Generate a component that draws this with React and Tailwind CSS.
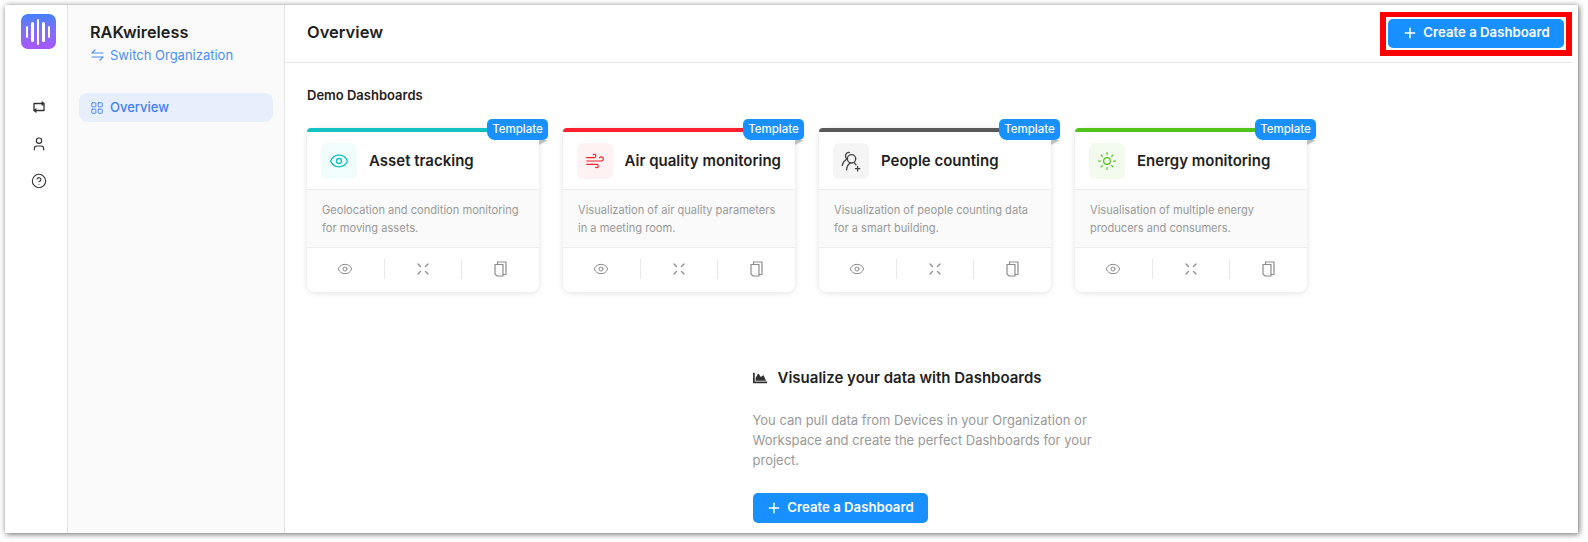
import { CircleHelp, Eye, LayoutGrid, Plus, Sun, User, Wind } from "lucide-react";
import { FaChartArea } from "react-icons/fa";

/* ── Custom icons ── */
const SwitchIcon = () => (
  <svg width="13" height="12" viewBox="0 0 13 12" fill="none" stroke="#4a90f7" strokeWidth="1.2" strokeLinecap="round" strokeLinejoin="round">
    <path d="M1 4h11M1 4l3-3" />
    <path d="M12 8H1M12 8l-3 3" />
  </svg>
);
const LogoMark = () => (
  <div className="w-[35px] h-[35px] rounded-[7px] bg-gradient-to-b from-[#3f80ff] to-[#a855f7] flex items-center justify-center gap-[3px]">
    <span className="w-[2.5px] h-[12px] rounded-full bg-white" />
    <span className="w-[2.5px] h-[20px] rounded-full bg-white" />
    <span className="w-[2.5px] h-[26px] rounded-full bg-white" />
    <span className="w-[2.5px] h-[20px] rounded-full bg-white" />
    <span className="w-[2.5px] h-[12px] rounded-full bg-white" />
  </div>
);
const LoopIcon = () => (
  <svg width="14" height="14" viewBox="0 0 14 14" fill="none" stroke="#333" strokeWidth="1.3" strokeLinecap="round" strokeLinejoin="round">
    <path d="M3.500 10.500H2V3.500h9.500" />
    <path d="M10.500 3.500H12v7H2.500" />
    <path d="M10 2l1.500 1.500L10 5" />
    <path d="M4 9l-1.500 1.500L4 12" />
  </svg>
);
const ShrinkIcon = () => (
  <svg width="12" height="12" viewBox="0 0 12 12" fill="none" stroke="#8c8c8c" strokeWidth="1.3" strokeLinecap="round" strokeLinejoin="round">
    <path d="M1 1l2.500 2.500M11 1L8.500 3.500M1 11l2.500-2.500M11 11L8.500 8.500" />
  </svg>
);
const CopyIcon = () => (
  <svg width="13" height="16" viewBox="0 0 13 16" fill="none" stroke="#8c8c8c" strokeWidth="1.2" strokeLinejoin="round">
    <path d="M1 3.500h8v11.500H3L1 13z" />
    <path d="M3.500 3.500V1h8.500v12.500H9" />
  </svg>
);
const PeopleIcon = () => (
  <svg width="22" height="22" viewBox="0 0 20 20" fill="none" stroke="#444" strokeWidth="1.2" strokeLinecap="round" strokeLinejoin="round">
    <circle cx="10.500" cy="8" r="3.800" />
    <path d="M6 18c.3-3 1.500-5 3.300-6" />
    <path d="M13 11.500l1.500 2" />
    <path d="M8.500 2.200C6.500 2 5 3.400 5 5.400c0 1.200.5 2.200 1.400 2.800C4 9.500 2.500 11.800 2 14" />
    <path d="M16 15v4M14 17h4" />
  </svg>
);

const cards = [
  { title: "Asset tracking", bar: "bg-[#13c2c2]", tint: "bg-[#f1fcfc]", icon: <Eye size={20} color="#13c2c2" strokeWidth={1.6} />, lines: ["Geolocation and condition monitoring", "for moving assets."] },
  { title: "Air quality monitoring", bar: "bg-[#ff1f2f]", tint: "bg-[#fff2f2]", icon: <Wind size={20} color="#f5222d" strokeWidth={1.4} />, lines: ["Visualization of air quality parameters", "in a meeting room."] },
  { title: "People counting", bar: "bg-[#595959]", tint: "bg-[#f5f5f5]", icon: <PeopleIcon />, lines: ["Visualization of people counting data", "for a smart building."] },
  { title: "Energy monitoring", bar: "bg-[#52c41a]", tint: "bg-[#f3fbef]", icon: <Sun size={20} color="#52c41a" strokeWidth={1.5} />, lines: ["Visualisation of multiple energy", "producers and consumers."] },
];

/* ── Demo card ── */
const DemoCard = ({ title, bar, tint, icon, lines }) => (
  <div className="relative w-[232px] h-[164px] rounded-lg bg-white shadow-[0_1px_6px_rgba(0,0,0,0.12)] flex flex-col">
    <div className={`h-[4px] rounded-t-lg ${bar}`} />
    <div className="h-[58px] px-[14px] flex items-center gap-3 border-b border-[#ececec]">
      <div className={`w-9 h-9 rounded-md flex items-center justify-center ${tint}`}>{icon}</div>
      <div className="pt-[1px] text-[15px] font-semibold text-[#1f1f1f] whitespace-nowrap">{title}</div>
    </div>
    <div className="h-[58px] px-[15px] pt-[1px] bg-[#fafafa] border-b border-[#ececec] flex flex-col justify-center text-[11.1px] leading-[18px] text-[#999]">
      {lines.map((l) => <div key={l} className="whitespace-nowrap">{l}</div>)}
    </div>
    <div className="flex-1 flex items-center pb-[2px]">
      <div className="flex-1 h-5 flex items-center justify-center border-r border-[#e8e8e8]"><Eye size={16} color="#8c8c8c" strokeWidth={1.5} /></div>
      <div className="flex-1 h-5 flex items-center justify-center border-r border-[#e8e8e8]"><ShrinkIcon /></div>
      <div className="flex-1 h-5 flex items-center justify-center"><CopyIcon /></div>
    </div>
    {/* Template ribbon */}
    <div className="absolute -top-[9px] -right-[9px] h-[21px] w-[61px] rounded-[5px] rounded-bl-lg bg-[#1890ff] text-white text-[11.5px] font-medium flex items-center justify-center">Template</div>
    <div className="absolute top-3 -right-[9px] w-0 h-0 border-t-[5px] border-r-[9px] border-t-[#bfbfbf] border-r-transparent" />
  </div>
);

export default function App() {
  return (
    <div className="h-[542px] bg-white pt-[5px] pl-[5px] pr-[10px] pb-[9px]" style={{ fontFamily: "Inter, 'Noto Sans', sans-serif" }}>
      <div className="h-full flex bg-white overflow-hidden shadow-[1px_1px_6px_rgba(0,0,0,0.6)]">

        {/* Icon rail */}
        <aside className="w-[63px] flex-shrink-0 border-r border-[#e4e4e4] flex flex-col items-center pt-[9px] pl-[4px]">
          <LogoMark />
          <div className="mt-[50px] ml-[2px] flex flex-col items-center gap-[21px] text-[#333]">
            <span className="w-4 h-4 flex items-center justify-center"><LoopIcon /></span>
            <User size={16} strokeWidth={1.7} />
            <CircleHelp size={16} strokeWidth={1.6} />
          </div>
        </aside>

        {/* Org sidebar */}
        <aside className="w-[217px] flex-shrink-0 bg-[#fafafa] border-r border-[#e4e4e4] px-[11px] pt-[16px]">
          <div className="pl-[11px] text-[16.3px] leading-[22px] font-semibold text-[#1f1f1f]">RAKwireless</div>
          <div className="mt-[1px] pl-[12px] flex items-center gap-[6px] text-[13px] leading-[22px] text-[#4a90f7]">
            <SwitchIcon />
            Switch Organization
          </div>
          <div className="mt-[27px] h-[29px] rounded-lg bg-[#e6effb] pl-[11px] flex items-center gap-[6px] text-[13px] font-medium text-[#3f80f5]">
            <LayoutGrid size={14} strokeWidth={1.5} />
            Overview
          </div>
        </aside>

        {/* Main */}
        <main className="flex-1 min-w-0 flex flex-col pr-[5px]">
          <header className="h-[58px] flex-shrink-0 border-b border-[#e8e8e8] pl-[22px] flex items-center justify-between">
            <div className="pb-[3px] text-[16.5px] font-semibold text-[#1f1f1f]">Overview</div>
            <div className="border-x-[6px] border-t-[5px] border-b-[6px] border-[#f00] p-[2px] mr-[1px]">
              <button className="w-[176px] h-[29px] rounded-[5px] bg-[#1890ff] text-white text-[13.2px] font-semibold flex items-center justify-center gap-[5px]">
                <Plus size={16} strokeWidth={2.2} />
                Create a Dashboard
              </button>
            </div>
          </header>

          <section className="pl-[22px] pt-[23px]">
            <div className="text-[13px] leading-[18px] font-semibold text-[#1f1f1f]">Demo Dashboards</div>
            <div className="mt-[24px] flex gap-6">
              {cards.map((c) => <DemoCard key={c.title} {...c} />)}
            </div>
          </section>

          <section className="mx-auto w-[353px] mt-[75px]">
            <div className="flex items-center gap-[11px] text-[15px] font-semibold text-[#1f1f1f]">
              <FaChartArea size={14} color="#333" />
              Visualize your data with Dashboards
            </div>
            <p className="mt-[20px] text-[13px] leading-[20px] text-[#999]">
              You can pull data from Devices in your Organization or Workspace and create the perfect Dashboards for your project.
            </p>
            <button className="mt-[23px] w-[175px] h-[30px] rounded-[5px] bg-[#1890ff] text-white text-[13.2px] font-semibold flex items-center justify-center gap-[5px]">
              <Plus size={16} strokeWidth={2.2} />
              Create a Dashboard
            </button>
          </section>
        </main>
      </div>
    </div>
  );
}
